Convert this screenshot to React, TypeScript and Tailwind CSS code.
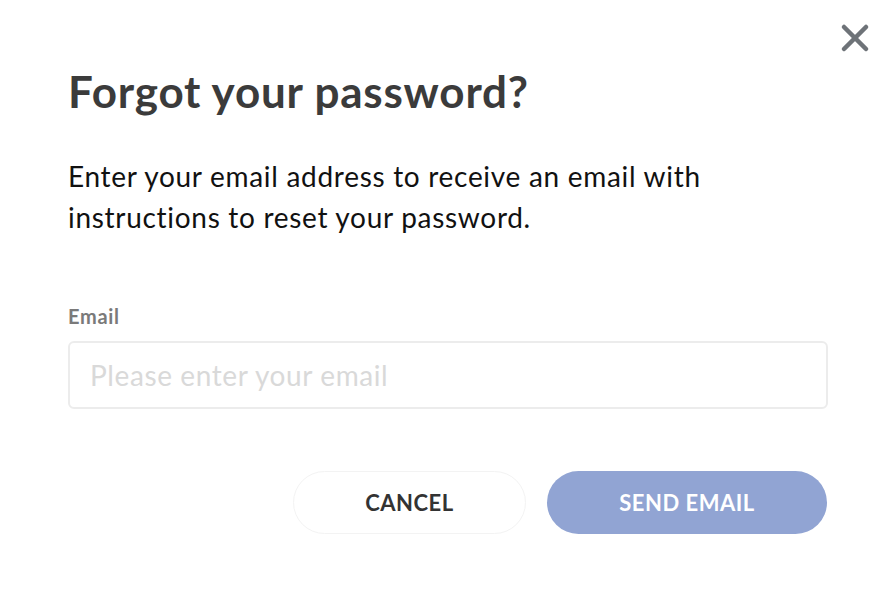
import { X } from 'lucide-react'

export default function App() {
  return (
    <div className="relative h-[592px] w-[892px] bg-white font-['Lato',sans-serif]">
      <button
        type="button"
        aria-label="Close"
        className="absolute right-[15px] top-[16px] text-[#6e7378]"
      >
        <X className="h-[44px] w-[44px]" strokeWidth={2.5} />
      </button>

      <div className="pl-[68px] pr-[65px] pt-[64px]">
        <h2 className="text-[44px] font-bold leading-[54px] tracking-[0.8px] text-[#3b3b3b]">Forgot your password?</h2>

        <p className="mt-[38px] w-[680px] text-[28px] leading-[41px] tracking-[0.7px] text-[#111]">
          Enter your email address to receive an email with instructions to reset your password.
        </p>

        <label className="mt-[66px] block text-[20px] font-bold leading-[24px] tracking-[0.7px] text-[#7a7a7a]">Email</label>
        <input
          type="email"
          placeholder="Please enter your email"
          className="mt-[13px] block h-[68px] w-[760px] rounded-[6px] border-2 border-[#ececec] px-[20px] text-[28px] tracking-[0.6px] text-[#333] outline-none placeholder:text-[#d9d9d9]"
        />

        <div className="mt-[62px] flex justify-end gap-[21px]">
          <button
            type="button"
            className="h-[63px] w-[233px] rounded-full border border-[#f3f3f3] bg-white text-[22px] font-bold tracking-[0.5px] text-[#333]"
          >
            CANCEL
          </button>
          <button
            type="button"
            className="h-[63px] w-[280px] rounded-full bg-[#91a4d3] text-[22px] font-bold tracking-[0.5px] text-white"
          >
            SEND EMAIL
          </button>
        </div>
      </div>
    </div>
  )
}
